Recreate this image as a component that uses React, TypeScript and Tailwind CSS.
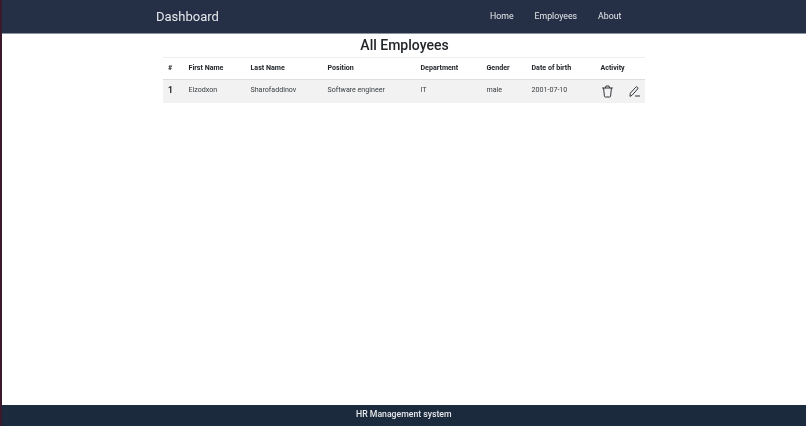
import React from "react";

const headers = [
  ["#", "w-[20.5px]"],
  ["First Name", "w-[62px]"],
  ["Last Name", "w-[77px]"],
  ["Position", "w-[93px]"],
  ["Department", "w-[66px]"],
  ["Gender", "w-[45px]"],
  ["Date of birth", "w-[69px]"],
  ["Activity", "w-[49.5px]"],
];

const cells = ["Elzodxon", "Sharofaddinov", "Software engineer", "IT", "male", "2001-07-10"];

function TrashIcon() {
  return (
    <svg width="13" height="13" viewBox="0 0 13 13" fill="none" stroke="currentColor" strokeWidth="1" strokeLinecap="round" strokeLinejoin="round">
      <path d="M1.5 3h10" />
      <path d="M4.5 2.8 5 1h3l.5 1.8" />
      <path d="M2.6 3.2 3.4 11.2a1 1 0 0 0 1 .8h4.2a1 1 0 0 0 1-.8l.8-8" />
    </svg>
  );
}

function PencilLineIcon() {
  return (
    <svg width="11" height="11" viewBox="0 0 11 11" fill="none" stroke="currentColor" strokeWidth="1" strokeLinecap="round" strokeLinejoin="round">
      <path d="M1 10 1.3 7.2 6.8 1.2a1.1 1.1 0 0 1 1.6 0l.2.2a1.1 1.1 0 0 1 0 1.6L3.3 9z" />
      <path d="M6.4 10h4.2" />
    </svg>
  );
}

export default function App() {
  return (
    <div className="flex h-[426px] w-[806px] overflow-hidden bg-white font-['Roboto',sans-serif]">
      <div className="w-[2px] shrink-0 bg-[#3a1a2a]" />
      <div className="flex min-w-0 flex-1 flex-col">
        <header className="flex h-[34px] shrink-0 items-center justify-between border-b border-[#8a93a0] bg-[#252f45] pl-[154px] pr-[185px]">
          <span className="text-[13px] leading-none text-[#e6e9ed] will-change-transform">Dashboard</span>
          <nav className="flex gap-[21px] pt-[1px] text-[8.75px] text-[#e6e9ed] will-change-transform">
            <a>Home</a>
            <a>Employees</a>
            <a>About</a>
          </nav>
        </header>
        <main className="flex-1 pl-[161px] will-change-transform">
          <h1 className="mt-[3px] w-[483px] text-center text-[14px] leading-[17px] font-medium text-[#212529]">All Employees</h1>
          <table className="mt-[3px] w-[482px] table-fixed border-collapse text-[7.1px] text-[#212529]">
            <thead>
              <tr className="h-[22px] border-t border-b border-t-[#eeeeee] border-b-[#dcdfe2]">
                {headers.map(([h, w]) => (
                  <th key={h} className={`${w} pl-[5px] text-left font-bold`}>{h}</th>
                ))}
              </tr>
            </thead>
            <tbody>
              <tr className="h-[23px] bg-[#f2f2f2]">
                <td className="pb-[2px] pl-[5px] text-[8.5px] font-bold">1</td>
                {cells.map((c) => (
                  <td key={c} className="pb-[1px] pl-[5px] text-[#3c4044]">{c}</td>
                ))}
                <td className="pl-[5px]">
                  <div className="flex items-center gap-[15px] pt-[1px] text-[#33373b]">
                    <TrashIcon />
                    <PencilLineIcon />
                  </div>
                </td>
              </tr>
            </tbody>
          </table>
        </main>
        <footer className="flex h-[21px] shrink-0 items-center justify-center bg-[#1c2a3d] pb-[1px] text-[8.7px] font-medium text-[#e6e8eb]">
          <span className="will-change-transform">HR Management system</span>
        </footer>
      </div>
    </div>
  );
}
